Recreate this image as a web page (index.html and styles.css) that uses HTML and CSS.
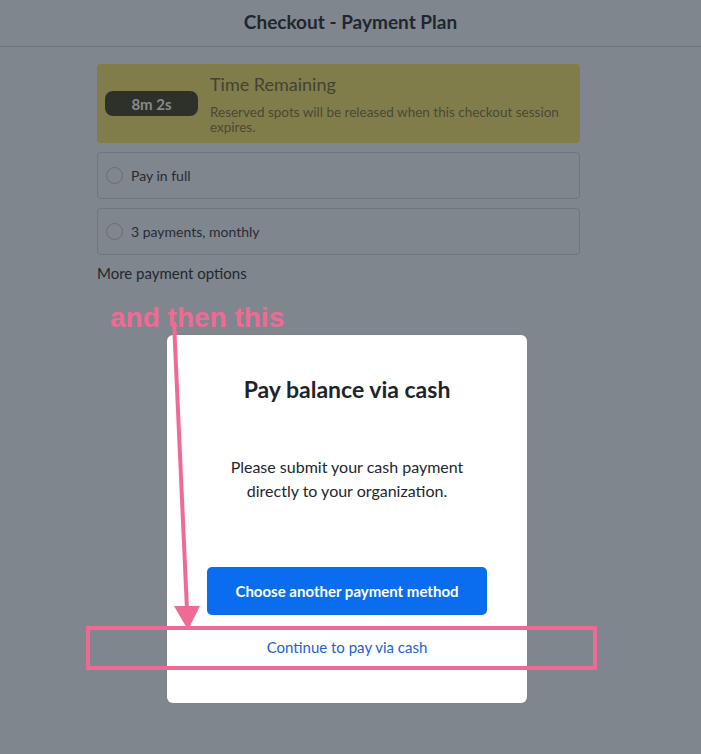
FILE: index.html
```html
<!DOCTYPE html>
<html lang="en">
<head>
	<meta charset="utf-8">
	<title>Checkout - Payment Plan</title>
	<link rel="stylesheet" href="styles.css">
</head>
<body>
<header class="topbar">
	<h1>Checkout - Payment Plan</h1>
</header>
<main class="checkout">
	<section class="timer">
		<span class="timer-badge">8m 2s</span>
		<div class="timer-text">
			<h2>Time Remaining</h2>
			<p>Reserved spots will be released when this checkout session expires.</p>
		</div>
	</section>
	<label class="plan"><span class="radio"></span>Pay in full</label>
	<label class="plan"><span class="radio"></span>3 payments, monthly</label>
	<div class="more">More payment options</div>
</main>

<div class="modal">
	<h2>Pay balance via cash</h2>
	<p>Please submit your cash payment<br>directly to your organization.</p>
	<button class="btn-primary">Choose another payment method</button>
	<a class="link" href="#">Continue to pay via cash</a>
</div>

<!-- annotation drawn on top of the screenshot -->
<div class="note">and then this</div>
<svg class="arrow" width="40" height="320" viewBox="0 0 40 320">
	<line x1="7" y1="2" x2="20" y2="290" stroke="#ef6b96" stroke-width="4"/>
	<polygon points="7,286 33,286 21,310" fill="#ef6b96"/>
</svg>
<div class="highlight"></div>
</body>
</html>
```

FILE: styles.css
```css
body {
	margin: 0;
	background: #80868d;
	font-family: Lato, "Open Sans", sans-serif;
	color: #252b31;
	height: 754px;
	overflow: hidden;
	position: relative;
}

.topbar {
	height: 43px;
	padding-bottom: 3px;
	border-bottom: 1px solid #6d737a;
	display: flex;
	align-items: center;
	justify-content: center;
}

.topbar h1 {
	margin: 0;
	font-size: 19px;
	font-weight: 700;
	color: #20262d;
}

.checkout {
	width: 483px;
	margin: 17px auto 0 97px;
}

.timer {
	background: #807d4b;
	border-radius: 4px;
	display: flex;
	align-items: center;
	padding: 8px 4px 8px 8px;
	height: 63px;
}

.timer-badge {
	width: 93px;
	height: 25px;
	border-radius: 8px;
	background: #2e3129;
	color: #868b8d;
	font-size: 15px;
	font-weight: 700;
	display: flex;
	align-items: center;
	justify-content: center;
	margin-right: 12px;
	flex-shrink: 0;
}

.timer-text h2 {
	margin: 0 0 10px;
	font-size: 18px;
	line-height: 22px;
	font-weight: 400;
	color: #43432f;
}

.timer-text p {
	margin: 0;
	font-size: 13.5px;
	line-height: 15px;
	color: #4a4934;
}

.plan {
	display: flex;
	align-items: center;
	height: 45px;
	border: 1px solid #6f757c;
	border-radius: 4px;
	margin-top: 9px;
	font-size: 14px;
	color: #272c32;
}

.radio {
	width: 15px;
	height: 15px;
	border: 1px solid #676d73;
	border-radius: 50%;
	margin: 0 8px 0 8px;
}

.more {
	margin-top: 9px;
	font-size: 15px;
	color: #23282e;
}

.modal {
	position: absolute;
	left: 167px;
	top: 335px;
	width: 360px;
	height: 368px;
	background: #fff;
	border-radius: 6px;
	display: flex;
	flex-direction: column;
	align-items: center;
	text-align: center;
}

.modal h2 {
	margin: 40px 0 0;
	font-size: 23px;
	font-weight: 700;
	color: #1d242c;
}

.modal p {
	margin: 52px 0 0;
	font-size: 16px;
	line-height: 24px;
	color: #22282e;
}

.btn-primary {
	margin-top: 64px;
	width: 280px;
	height: 48px;
	border: none;
	border-radius: 5px;
	background: #0a6df0;
	color: #fff;
	font-family: inherit;
	font-size: 15px;
	font-weight: 700;
}

.link {
	margin-top: 23px;
	font-size: 15px;
	color: #1c62d4;
	text-decoration: none;
}

.note {
	position: absolute;
	left: 110px;
	top: 302px;
	font-family: "Liberation Sans", Arial, sans-serif;
	font-weight: 700;
	font-size: 28px;
	color: #ef6b96;
}

.arrow {
	position: absolute;
	left: 167px;
	top: 320px;
}

.highlight {
	position: absolute;
	left: 86px;
	top: 626px;
	width: 503px;
	height: 36px;
	border: 4px solid #ee6a93;
}
```
